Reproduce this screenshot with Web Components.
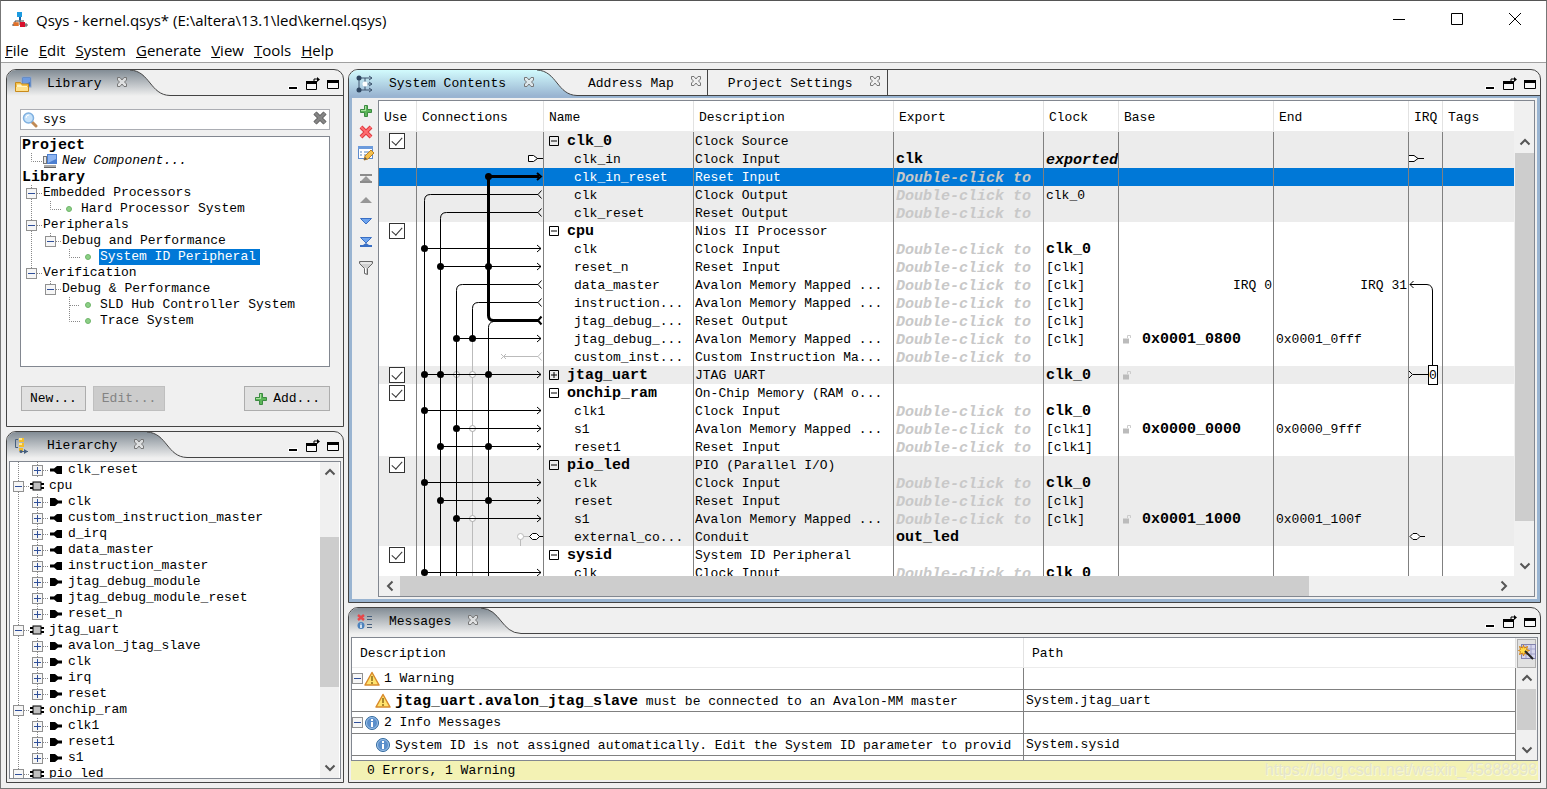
<!DOCTYPE html>
<html lang="en">
<head>
<meta charset="utf-8">
<title>Qsys - kernel.qsys*</title>
<style>
  html, body { margin: 0; height: 100%; background: #f0f0f0; }
</style>
</head>
<body>
<qsys-app></qsys-app>

<script>
const ICONS = {
  qsys: ['0 0 16 16', `<path d="M8 5v8M8 9H3v5M8 9h4" stroke="#444" fill="none"/><rect x="5" y="0" width="5" height="5" fill="#1d9be0"/><path d="M7 5h2v3H7z" fill="#1664a8"/><path d="M2 14v-3h1.500v3M4.500 14v-3H6v3" stroke="#e0702a" stroke-width="1.500" fill="none"/><path d="M0 13h2M12 13h4M14 11v4" stroke="#555"/><rect x="8" y="10" width="5" height="5" fill="#d8102c"/>`],
  library: ['0 0 18 18', `<rect x="8" y="2" width="9" height="10" fill="#3f74c4" stroke="#8fa6c8"/><path d="M9 3h7v4l-7 3z" fill="#6e9be0"/><path d="M1.500 7.500h5l1 1.500h7v7.500h-13z" fill="#f5c24a" stroke="#c88a1c"/><path d="M3 9.500h4l1 1.500h5v1H3z" fill="#fff3c4"/><path d="M2 12h12v4H2z" fill="#ffe08a"/>`],
  hierarchy: ['0 0 18 18', `<path d="M4 2.500H1.500v8H4" stroke="#47607e" fill="none"/><path d="M5 1h5v4H5zM5 6h5v4H5zM5 11h4v3H5z" fill="#f2bd2b"/><path d="M5 1h3v2H5zM5 6h3v2H5z" fill="#ffe88c"/><path d="M7 14.500h7" stroke="#47607e"/><circle cx="7" cy="14.500" r="1.500" fill="#47607e"/><path d="M10 12l4 2.500-4 2.500z" fill="#47607e"/>`],
  system: ['0 0 18 18', `<path d="M3 3v12M3 3h13M3 15h13M9 3v12M9 9h7" stroke="#3f556e" fill="none"/><circle cx="3" cy="3" r="2.500" fill="#2f4660"/><circle cx="3" cy="15" r="2.500" fill="#2f4660"/><circle cx="9" cy="9" r="2.500" fill="#fff"/><path d="M13 1l3 2-3 2M13 13l3 2-3 2M13 7l3 2-3 2" stroke="#3f556e" fill="none"/>`],
  messages: ['0 0 18 18', `<path d="M2 2l6 5M8 2L2 7" stroke="#e8474a" stroke-width="2.500"/><circle cx="5" cy="12.500" r="3.500" fill="#4c82bd"/><path d="M5 10.500v1M5 12v3" stroke="#fff" stroke-width="1.500"/><path d="M11 3.500h5M11 6.500h5M11 11.500h5M11 14.500h5" stroke="#47607e"/>`],
  close: ['0 0 12 12', `<path d="M1.500 1.500h2.500l2 2.500 2-2.500h2.500v2.500L8.500 6l2 2v2.500H8L6 8l-2 2.500H1.500V8l2-2-2-2z" fill="#eee" fill-opacity=".7" stroke="#777"/>`],
  minimize: ['0 0 14 14', `<path d="M4 9h10v4H4z" fill="#fff"/><path d="M5 10h8v2H5z"/>`],
  detach: ['0 0 16 14', `<path d="M2.500 4.500h10v8h-10z" fill="#f8f8f8" stroke="#000"/><path d="M2 4h11v3H2z"/><path d="M10 6V2h4" fill="none" stroke="#000"/><path d="M13 0l3 2.500-3 2.500z"/>`],
  maximize: ['0 0 14 14', `<path d="M1.500 3.500h11v8h-11z" fill="#f8f8f8" stroke="#000"/><path d="M1 3h12v3H1z"/>`],
  search: ['0 0 16 16', `<path d="M10 10l4 4" stroke="#c08a55" stroke-width="3" stroke-linecap="round"/><circle cx="6.500" cy="6" r="5" fill="#c6e2fa" stroke="#7fb0e0" stroke-width="1.500"/><path d="M4 6a3 3 0 0 1 3-3" stroke="#fff" fill="none"/>`],
  clear: ['0 0 16 16', `<path d="M3 3l10 10M13 3L3 13" stroke="#555" stroke-width="4.500"/><path d="M3 3l10 10M13 3L3 13" stroke="#858585" stroke-width="3"/>`],
  component: ['0 0 16 16', `<rect x="1.500" y="3.500" width="3" height="7" fill="#e8e8e8" stroke="#777"/><rect x="5" y="1" width="10" height="10" fill="#4c7fd0"/><path d="M6 2h8v4l-8 4z" fill="#8db4f0"/><path d="M2 12h12v2H2z" fill="#aaa"/><path d="M2 14.500h12" stroke="#666"/>`],
  dot: ['0 0 16 16', `<circle cx="8" cy="8" r="2.500" fill="#8ccf86" stroke="#6fb56a"/>`],
  chip: ['0 0 16 16', `<path d="M1 6h14M1 10h14" stroke="#000" stroke-width="2"/><rect x="4" y="4" width="8" height="8" fill="#c0c0c0" stroke="#000"/>`],
  portin: ['0 0 16 16', `<path d="M2 4h5l3 2.500h4v3h-4L7 12H2z"/>`],
  portout: ['0 0 16 16', `<path d="M14 4H9L6 6.500H2v3h4L9 12h5z"/>`],
  add: ['0 0 14 14', `<path d="M5.500 1.500h3v4h4v3h-4v4h-3v-4h-4v-3h4z" fill="#5cb558" stroke="#3d8b42"/><path d="M6 2v4H2v1h5V2z" fill="#a9e2a0"/>`],
  remove: ['0 0 14 14', `<path d="M2 2l10 10M12 2L2 12" stroke="#dd3a40" stroke-width="4"/><path d="M2 2l10 10M12 2L2 12" stroke="#ff6d70" stroke-width="2"/>`],
  edit: ['0 0 18 16', `<rect x="1.500" y="1.500" width="14" height="12" fill="#fff" stroke="#5f8ccc"/><path d="M1 1h15v3H1z" fill="#6c9bdc"/><path d="M3 7h2M3 10h2M7 7h6M7 10h4" stroke="#5580b8"/><path d="M7 15l1-4 6-6 3 3-6 6z" fill="#f4c04c" stroke="#b87f28"/><path d="M7 15l1-3 2 2z" fill="#555"/>`],
  top: ['0 0 14 14', `<path d="M1 2h12v2H1z" fill="#8c8c8c"/><path d="M7 4l5 5H2z" fill="#999"/><path d="M1 9h12v2H1z" fill="#8c8c8c"/>`],
  up: ['0 0 14 14', `<path d="M7 4l6 6H1z" fill="#979797"/>`],
  down: ['0 0 14 14', `<path d="M1.500 4.500h11L7 10z" fill="#6ea4ee" stroke="#3a6fc4"/>`],
  bottom: ['0 0 14 14', `<path d="M1.500 2.500h11L7 8z" fill="#6ea4ee" stroke="#3a6fc4"/><path d="M1 10h12v2H1zM4 10l3-2 3 2z" fill="#3a6fc4"/>`],
  filter: ['0 0 16 16', `<path d="M1.500 1.500h13v2l-5 5v6l-3-1V8.500l-5-5z" fill="#d0d0d0" stroke="#666"/><path d="M3 3h10" stroke="#fff"/><path d="M7.500 8v5" stroke="#fff"/>`],
  lock: ['0 0 10 10', `<path d="M1 4.500h6v5H1z" fill="#bbb"/><path d="M5.500 4V1.500h3V4" stroke="#ccc" fill="none"/>`],
  warning: ['0 0 16 16', `<path d="M8 1.500L15 14H1z" fill="#ffe36e" stroke="#d88a2b" stroke-width="1.500" stroke-linejoin="round"/><path d="M8 5v5M8 11v2" stroke="#8d6a18" stroke-width="1.500"/>`],
  info: ['0 0 16 16', `<circle cx="8" cy="8" r="6.500" fill="#5b8fcb" stroke="#336a9e"/><circle cx="8" cy="8" r="5.500" fill="none" stroke="#9cc0e6"/><path d="M8 4v2M8 7v5" stroke="#fff" stroke-width="2"/>`],
  columns: ['0 0 18 18', `<rect x="3.500" y="1.500" width="14" height="14" fill="#d6d6ee" stroke="#8383ae"/><path d="M3 6h14M3 11h14M8 2v13M13 2v13" stroke="#a2a2c8"/><path d="M5.500 2l1 3 3-1.500-1 3 3 1-3 1 1 3-3-1.500-1 3-1-3-3 1.500 1-3-2-1 2-1-1-3 3 1.500z" fill="#ffdb4a" stroke="#cf7e17"/><path d="M7 8l8 8" stroke="#222" stroke-width="2"/>`],
  winmin: ['0 0 14 14', `<path d="M1 7.500h12" stroke="#000"/>`],
  winmax: ['0 0 14 14', `<path d="M1.500 1.500h11v11h-11z" stroke="#000" fill="none"/>`],
  winclose: ['0 0 14 14', `<path d="M1 1l12 12M13 1L1 13" stroke="#000" fill="none"/>`],
  chevup: ['0 0 12 12', `<path d="M1.500 8.500L6 4l4.500 4.500" stroke="#555" stroke-width="2" fill="none"/>`],
  chevdown: ['0 0 12 12', `<path d="M1.500 3.500L6 8l4.500-4.500" stroke="#555" stroke-width="2" fill="none"/>`],
  chevleft: ['0 0 12 12', `<path d="M8.500 1.500L4 6l4.500 4.500" stroke="#555" stroke-width="2" fill="none"/>`],
  chevright: ['0 0 12 12', `<path d="M3.500 1.500L8 6l-4.500 4.500" stroke="#555" stroke-width="2" fill="none"/>`]
};

class Base extends HTMLElement {
  connectedCallback() {
    if (this.shadowRoot) return;
    this.attachShadow({ mode: 'open' }).innerHTML =
      `<style>*{box-sizing:border-box}button{font:inherit;color:inherit;border:0;padding:0;margin:0;background:none}${this.css()}</style>${this.html()}`;
  }
}

customElements.define('q-icon', class extends Base {
  css() { return `:host{display:inline-flex;flex:none}svg{display:block}`; }
  html() {
    const [box, body] = ICONS[this.getAttribute('name')];
    const [, , w, h] = box.split(' ');
    return `<svg viewBox="${box}" width="${w}" height="${h}" aria-hidden="true">${body}</svg>`;
  }
});

customElements.define('title-bar', class extends Base {
  css() { return `
    :host{display:flex;align-items:center;height:37px;padding:0 24px 0 11px;background:#fff;font:15px "Open Sans","Noto Sans",sans-serif;color:#000}
    h1{font:inherit;margin:0 0 0 8px;flex:1}
    nav{display:flex;gap:44px}`; }
  html() { return `<q-icon name="qsys"></q-icon><h1><slot></slot></h1>
    <nav><button aria-label="Minimize"><q-icon name="winmin"></q-icon></button><button aria-label="Maximize"><q-icon name="winmax"></q-icon></button><button aria-label="Close"><q-icon name="winclose"></q-icon></button></nav>`; }
});

customElements.define('menu-bar', class extends Base {
  css() { return `
    :host{display:flex;align-items:center;gap:10px;height:25px;padding:0 4px;background:#fff;border-bottom:1px solid #a0a0a0;font:15px "Open Sans","Noto Sans",sans-serif;color:#000}
    button{white-space:pre}`; }
  html() { return ['File','Edit','System','Generate','View','Tools','Help'].map(t => `<button><u>${t[0]}</u>${t.slice(1)}</button>`).join(''); }
});

customElements.define('dock-panel', class extends Base {
  css() { return `
    :host{display:flex;flex-direction:column;min-height:0;min-width:0;border:1px solid #444;border-radius:10px 10px 0 0;background:#f0f0f0;overflow:hidden;
      --top:#828c95;--bottom:#f0f0f0}
    :host([active]){--top:#d2fbfd;--bottom:#99b4d1}
    header{display:flex;height:26px;flex:none}
    .tab{display:flex;align-items:center;padding:1px 2px 0 7px;background:linear-gradient(var(--top),var(--bottom))}
    .label{flex:1;text-align:left;padding-left:15px;white-space:pre}
    .curve{display:block;flex:none}
    .rest{flex:1;display:flex;border-bottom:1px solid #444;min-width:0}
    .actions{display:flex;margin-left:auto;align-items:center;gap:6px;padding:6px 3px 0 0}
    .body{flex:1;display:flex;flex-direction:column;min-height:0}
    :host([active]) .body{border:3px solid #99b4d1;border-top-width:2px;background:#f0f0f0;margin:0}`; }
  html() {
    const w = this.getAttribute('tab-width');
    return `<header><div class="tab" style="width:${w}px"><q-icon name="${this.getAttribute('icon')}"></q-icon><button class="label">${this.getAttribute('label')}</button><button aria-label="Close tab"><q-icon name="close"></q-icon></button></div>
    <svg class="curve" width="40" height="26" viewBox="0 0 40 26" aria-hidden="true"><defs><linearGradient id="g" x1="0" y1="0" x2="0" y2="26" gradientUnits="userSpaceOnUse"><stop offset="0" style="stop-color:var(--top)"/><stop offset="1" style="stop-color:var(--bottom)"/></linearGradient></defs>
    <path d="M0 0C20 1 20 25 40 25.500V26H0z" fill="url(#g)"/><path d="M0 0C20 1 20 25 40 25.500" fill="none" stroke="#444"/></svg>
    <div class="rest"><slot name="tabs"></slot><div class="actions"><button aria-label="Minimize"><q-icon name="minimize"></q-icon></button><button aria-label="Detach"><q-icon name="detach"></q-icon></button><button aria-label="Maximize"><q-icon name="maximize"></q-icon></button></div></div></header>
    <div class="body"><slot></slot></div>`;
  }
});

customElements.define('side-tab', class extends Base {
  css() { return `:host{display:flex;align-items:center;gap:16px;padding:1px 6px 0 20px;border-right:1px solid #444}:host(:first-of-type){padding:1px 5px 0 11px}button{white-space:pre}`; }
  html() { return `<button><slot></slot></button><button aria-label="Close tab"><q-icon name="close"></q-icon></button>`; }
});

customElements.define('scroll-bar', class extends Base {
  css() { return `
    :host{display:flex;flex-direction:column;width:19px;flex:none;background:#f0f0f0}
    :host([horizontal]){flex-direction:row;width:auto;height:20px}
    button{display:flex;align-items:center;justify-content:center;flex:none;height:20px}
    :host([horizontal]) button{height:auto;width:21px}
    .track{flex:1;display:flex;flex-direction:inherit;min-height:0}
    .thumb{background:#cdcdcd}`; }
  html() {
    const h = this.hasAttribute('horizontal');
    const [a, b, c] = this.getAttribute('split').split(' ');
    return `<button aria-label="Scroll back"><q-icon name="${h ? 'chevleft' : 'chevup'}"></q-icon></button>
    <div class="track"><div style="flex:${a} 0 0"></div><div class="thumb" style="flex:${b} 0 0"></div><div style="flex:${c} 0 0"></div></div>
    <button aria-label="Scroll forward"><q-icon name="${h ? 'chevright' : 'chevdown'}"></q-icon></button>`;
  }
});

/* One tree line. "guides" holds one letter per indent level:
   | passing line, L last branch, E middle branch, M/m expanded, P/p collapsed (lower case: line stops here). */
customElements.define('tree-row', class extends Base {
  css() { return `
    :host{display:flex;align-items:center;height:16px;line-height:16px;white-space:pre}
    svg{display:block;flex:none}q-icon{margin-right:3px}
    span{padding:0 1px}
    :host([bold]) span{font-weight:bold;font-size:15px;line-height:18px;padding:0}
    :host([bold]){margin-left:-1px;align-items:flex-start}
    :host([italic]) span{font-style:italic}
    :host([selected]) span{background:#0078d7;color:#fff;padding-right:4px}`; }
  cell(c) {
    const line = d => `<path d="${d}" stroke="#888" stroke-dasharray="1 1" fill="none"/>`;
    let s = '';
    if (c === '|') s = line('M8.500 0V16');
    if (c === 'L') s = line('M8.500 0V8.500H19');
    if (c === 'E') s = line('M8.500 0V16M9 8.500H19');
    if ('MmPp'.includes(c)) {
      s = line((c === 'M' || c === 'P') ? 'M8.500 0V16M14 8.500H19' : 'M8.500 0V8M14 8.500H19') +
        `<rect x="3.500" y="3.500" width="10" height="10" fill="#f6f6f6" stroke="#919191"/><path d="M5 8.500h7${c.toLowerCase() === 'p' ? 'M8.500 5v7' : ''}" stroke="#2f4f9a"/>`;
      return `<button aria-label="Toggle"><svg width="19" height="16">${s}</svg></button>`;
    }
    return `<svg width="19" height="16" aria-hidden="true">${s}</svg>`;
  }
  html() {
    const icon = this.getAttribute('icon');
    return [...(this.getAttribute('guides') || '')].map(c => this.cell(c)).join('') + (icon ? `<q-icon name="${icon}"></q-icon>` : '') + `<span><slot></slot></span>`;
  }
});

customElements.define('library-view', class extends Base {
  css() { return `
    :host{flex:1;display:flex;flex-direction:column;padding:13px 13px 15px;min-height:0}
    .search{display:flex;align-items:center;height:21px;border:1px solid #abadb3;background:#fff;padding:0 1px}
    input{flex:1;min-width:0;border:0;outline:0;background:none;font:inherit;color:inherit;padding:0 0 0 5px;margin:0}
    .tree{flex:1;margin-top:6px;border:1px solid #828790;background:#fff;padding:0 2px;min-height:0;overflow:hidden}
    footer{display:flex;gap:7px;margin-top:19px;padding-left:1px}
    footer button{display:flex;align-items:center;height:25px;padding:0 8px;gap:5px;border:1px solid #adadad;background:#e1e1e1}
    footer button:disabled{background:#ccc;border-color:#bfbfbf;color:#838383}
    footer .add{margin-left:auto;padding:0 9px}`; }
  html() { return `
    <div class="search"><q-icon name="search"></q-icon><input aria-label="Search library" value="sys"><button aria-label="Clear search"><q-icon name="clear"></q-icon></button></div>
    <div class="tree">
      <tree-row bold>Project</tree-row>
      <tree-row guides="L" icon="component" italic>New Component...</tree-row>
      <tree-row bold>Library</tree-row>
      <tree-row guides="M">Embedded Processors</tree-row>
      <tree-row guides="|L" icon="dot">Hard Processor System</tree-row>
      <tree-row guides="M">Peripherals</tree-row>
      <tree-row guides="|m">Debug and Performance</tree-row>
      <tree-row guides="| L" icon="dot" selected>System ID Peripheral</tree-row>
      <tree-row guides="m">Verification</tree-row>
      <tree-row guides=" m">Debug &amp; Performance</tree-row>
      <tree-row guides="  E" icon="dot">SLD Hub Controller System</tree-row>
      <tree-row guides="  L" icon="dot">Trace System</tree-row>
    </div>
    <footer><button>New...</button><button disabled>Edit...</button><button class="add"><q-icon name="add"></q-icon>Add...</button></footer>`; }
});

customElements.define('hierarchy-view', class extends Base {
  css() { return `
    :host{flex:1;display:flex;margin:3px 2px;border:1px solid #828790;background:#fff;min-height:0}
    .rows{flex:1;overflow:hidden;min-width:0}scroll-bar{margin-right:1px}`; }
  html() {
    const rows = [['|P','portout','clk_reset'],['M','chip','cpu'],['|P','portin','clk'],['|P','portout','custom_instruction_master'],['|P','portout','d_irq'],['|P','portout','data_master'],['|P','portout','instruction_master'],['|P','portin','jtag_debug_module'],['|P','portout','jtag_debug_module_reset'],['|p','portin','reset_n'],['M','chip','jtag_uart'],['|P','portin','avalon_jtag_slave'],['|P','portin','clk'],['|P','portin','irq'],['|p','portin','reset'],['M','chip','onchip_ram'],['|P','portin','clk1'],['|P','portin','reset1'],['|p','portin','s1'],['M','chip','pio_led']];
    return `<div class="rows">${rows.map(([g, i, t]) => `<tree-row guides="${g}" icon="${i}">${t}</tree-row>`).join('')}</div><scroll-bar split="56 152 72"></scroll-bar>`;
  }
});

customElements.define('tool-strip', class extends Base {
  css() { return `:host{display:flex;flex-direction:column;align-items:center;width:26px;flex:none;padding:3px 0 0 2px;gap:1px}button{display:flex;align-items:center;justify-content:center;height:20px;width:22px}hr{border:0;margin:0;height:4px}`; }
  html() {
    return ['add','remove','edit','','top','up','down','bottom','','filter'].map(n => n ? `<button aria-label="${n}"><q-icon name="${n}"></q-icon></button>` : '<hr>').join('');
  }
});

/* Wiring between interfaces: lanes run down, every wire ends at the right edge of its table row. */
customElements.define('connection-graph', class extends Base {
  css() { return `:host{position:absolute;left:0;top:0;pointer-events:none}svg{display:block}`; }
  html() {
    const lane = n => 7.5 + 16 * (n - 1), y = r => 18 * r + 8.5, end = 450;
    const p = (d, c = '#000', w = 1) => `<path d="${d}" fill="none" stroke="${c}" stroke-width="${w}"/>`;
    const head = (r, w = 1) => p(`M120 ${y(r) - 3.5}L124 ${y(r)}L120 ${y(r) + 3.5}`, '#000', w);
    const tail = (r, c = '#000', w = 1) => p(`M124.500 ${y(r) - 4}L121 ${y(r)}L124.500 ${y(r) + 4}`, c, w);
    const out = (n, r, stop = end) => p(`M121 ${y(r)}H${lane(n) + 6}Q${lane(n)} ${y(r)} ${lane(n)} ${y(r) + 6}V${stop}`) + tail(r);
    const into = (first, r) => p(`M${lane(first)} ${y(r)}H124`) + head(r);
    const dot = (n, r) => `<circle cx="${lane(n)}" cy="${y(r)}" r="3.500"/>`;
    const ring = (n, r) => `<circle cx="${lane(n)}" cy="${y(r)}" r="3" fill="#fff" stroke="#aaa"/>`;
    let s = p(`M${lane(4)} ${y(11)}V${end}`, '#bbb');
    for (const [n, r] of [[3, 13], [4, 13], [4, 16], [4, 21]]) s += ring(n, r);
    s += out(1, 3) + out(2, 4) + out(3, 8) + out(4, 9, y(11));
    s += p(`M${lane(5) + 5} ${y(10) + 1}Q${lane(5)} ${y(10) + 2} ${lane(5)} ${y(10) + 7}V${end}`);
    s += p(`M122 ${y(2)}H${lane(5)}V${y(10) - 5}Q${lane(5)} ${y(10)} ${lane(5) + 5} ${y(10)}H121`, '#000', 3) + head(2, 2) + tail(10, '#000', 2);
    const taps = [[6,[1]],[7,[2,5]],[11,[3,4]],[13,[1,2,5]],[15,[1]],[16,[3]],[17,[2,5]],[19,[1]],[20,[2,5]],[21,[3]],[24,[1]]];
    for (const [r, ns] of taps) s += into(ns[0], r) + ns.map(n => dot(n, r)).join('');
    s += dot(5, 2);
    s += p(`M84 ${y(12) - 2.5}l5 5m0-5l-5 5M87 ${y(12)}H121`, '#bbb') + tail(12, '#bbb');
    s += `<path d="M111.500 ${y(1) - 3}h5l4 3-4 3h-5zM120 ${y(1)}h7" fill="#fff" stroke="#000"/>`;
    s += p(`M103.500 ${y(22)}V414M103 ${y(22)}H112`, '#bbb') + `<circle cx="103.500" cy="${y(22)}" r="3" fill="#fff" stroke="#bbb"/><path d="M112.500 ${y(22)}l3-3h4l3 3-3 3h-4zM122 ${y(22)}h5" fill="#fff" stroke="#000"/>`;
    return `<svg width="127" height="450" aria-hidden="true">${s}</svg>`;
  }
});

customElements.define('irq-graph', class extends Base {
  css() { return `:host{position:absolute;left:0;top:0;pointer-events:none}svg{display:block}text{font-size:13px}`; }
  html() { return `<svg width="33" height="450"><g fill="none" stroke="#000">
    <path d="M0 23.500h5l4 3-4 3H0" fill="#fff"/><path d="M9 26.500h6"/><path d="M4.500 149L1 152.500l3.500 3.500M1 152.500H18Q23.500 153 23.500 159V234M0 239l3.500 3.500L0 246M4 242.500H19"/>
    <rect x="19.500" y="233.500" width="9" height="19" fill="#fff"/><path d="M1 404.500l3-3h4l3 3-3 3H4zM11 404.500h5" fill="#fff"/></g><text x="20" y="247">0</text></svg>`; }
});

customElements.define('system-table', class extends Base {
  css() { return `
    :host{flex:1;display:grid;grid-template-columns:1fr 20px;grid-template-rows:1fr 20px;margin:2px 2px 2px 0;border:1px solid #828790;min-width:0;min-height:0;background:#f0f0f0}
    .view{overflow:hidden;min-width:0;min-height:0;background:#fff}
    table{border-collapse:separate;border-spacing:0;table-layout:fixed;width:100%}
    th{height:31px;padding:2px 0 0 5px;text-align:left;font-weight:normal;border-bottom:1px solid #ececec;border-right:1px solid #e2e2e2;white-space:nowrap;overflow:hidden}
    td{height:18px;line-height:20px;padding:0 0 0 2px;border-right:1px solid #808080;white-space:pre;position:relative}
    td div{height:18px;overflow:hidden}
    th:last-child,td:last-child{border-right:0}
    tr.alt{background:#ececec}tr.sel{background:#0078d7;color:#fff}
    td.child{padding-left:30px}td.head{padding-left:5px;font-weight:bold;font-size:15px}
    td.desc{padding-left:1px}
    .head div{display:flex;align-items:flex-start;gap:8px}
    .fold{width:10px;height:18px;display:block}.fold svg{display:block}
    td.use{padding:1px 0 0 10px;line-height:0;vertical-align:top}
    input{appearance:none;width:16px;height:16px;margin:0;border:1px solid #333;background:#fff;position:relative;display:block}
    input:checked::before{content:"";position:absolute;left:4px;top:1px;width:5px;height:9px;border:solid #333;border-width:0 1px 1px 0;transform:rotate(42deg)}
    b{font-size:15px}.hint{font:italic bold 15px/22px "Liberation Mono",monospace;color:#c8c8c8}
    .exp{color:#000}td.right{text-align:right;padding-right:1px}
    .base div{display:flex;align-items:flex-start;gap:10px;padding-left:1px}.base q-icon{margin-top:4px}
    scroll-bar.v{margin:31px 0 0 1px;width:19px}
    .v{grid-row:1;grid-column:2}.h{grid-row:2;grid-column:1}`; }
  html() {
    const D = 'Double-click to', A = 'Avalon Memory Mapped ...';
    /* name, description, export, clock, base, end; a leading - or + marks a module, * marks a bold value */
    const rows = [
      ['-clk_0','Clock Source'],['clk_in','Clock Input','*clk','!exported'],['clk_in_reset','Reset Input',D],['clk','Clock Output',D,'clk_0'],['clk_reset','Reset Output',D],
      ['-cpu','Nios II Processor'],['clk','Clock Input',D,'*clk_0'],['reset_n','Reset Input',D,'[clk]'],['data_master',A,D,'[clk]','>IRQ 0','>IRQ 31'],['instruction...',A,D,'[clk]'],['jtag_debug_...','Reset Output',D,'[clk]'],['jtag_debug_...',A,D,'[clk]','0x0001_0800','0x0001_0fff'],['custom_inst...','Custom Instruction Ma...',D],
      ['+jtag_uart','JTAG UART','','*clk_0',' '],
      ['-onchip_ram','On-Chip Memory (RAM o...'],['clk1','Clock Input',D,'*clk_0'],['s1',A,D,'[clk1]','0x0000_0000','0x0000_9fff'],['reset1','Reset Input',D,'[clk1]'],
      ['-pio_led','PIO (Parallel I/O)'],['clk','Clock Input',D,'*clk_0'],['reset','Reset Input',D,'[clk]'],['s1',A,D,'[clk]','0x0001_1000','0x0001_100f'],['external_co...','Conduit','*out_led'],
      ['-sysid','System ID Peripheral'],['clk','Clock Input',D,'*clk_0']];
    const alt = r => r < 5 || r === 13 || (r > 17 && r < 23);
    const val = (t = '') => t[0] === '*' ? `<td><div><b>${t.slice(1)}</b></div></td>` : t[0] === '!' ? `<td><div class="hint exp">${t.slice(1)}</div></td>` : t === D ? `<td><div class="hint">${t}</div></td>` : t[0] === '>' ? `<td class="right"><div>${t.slice(1)}</div></td>` : `<td><div>${t}</div></td>`;
    const body = rows.map(([n, d, e, c, b, f], r) => {
      const mod = '+-'.includes(n[0]);
      const name = mod ? `<td class="head"><div><button class="fold" aria-label="Toggle ${n.slice(1)}"><svg width="10" height="18"><path d="M.500 4.500h9v9h-9zM2 9h6${n[0] === '+' ? 'M5 6v6' : ''}" fill="none" stroke="#000"/></svg></button>${n.slice(1)}</div></td>` : `<td class="child"><div>${n}</div></td>`;
      const base = b && b[0] !== '>' ? `<td class="base"><div><q-icon name="lock"></q-icon><b>${b}</b></div></td>` : val(b);
      return `<tr class="${r === 2 ? 'sel' : alt(r) ? 'alt' : ''}"><td class="use">${mod ? `<input type="checkbox" checked aria-label="Use ${n.slice(1)}">` : ''}</td><td>${r ? '' : '<connection-graph></connection-graph>'}</td>${name}<td class="desc"><div>${d}</div></td>${val(e)}${val(c)}${base}${val(f)}<td>${r ? '' : '<irq-graph></irq-graph>'}</td><td></td></tr>`;
    }).join('');
    return `<div class="view"><table><colgroup>${[38,127,150,200,150,75,155,135,34].map(w => `<col style="width:${w}px">`).join('')}<col></colgroup>
      <thead><tr>${['Use','Connections','Name','Description','Export','Clock','Base','End','IRQ','Tags'].map(t => `<th scope="col">${t}</th>`).join('')}</tr></thead><tbody>${body}</tbody></table></div>
      <scroll-bar class="v" split="1 367 35"></scroll-bar><scroll-bar class="h" horizontal split="0 909 184"></scroll-bar>`;
  }
});

customElements.define('system-view', class extends Base {
  css() { return `:host{flex:1;display:flex;min-height:0;min-width:0}`; }
  html() { return `<tool-strip></tool-strip><system-table></system-table>`; }
});

customElements.define('message-view', class extends Base {
  css() { return `
    :host{flex:1;display:flex;flex-direction:column;margin:3px 2px 2px;min-height:0;position:relative}
    .box{flex:1;display:flex;border:1px solid #828790;min-height:0;background:#f0f0f0}
    .view{flex:1;overflow:hidden;background:#fff;min-width:0}
    table{border-collapse:separate;border-spacing:0;table-layout:fixed;width:100%}
    th{height:30px;text-align:left;font-weight:normal;padding:1px 8px 0;border-right:1px solid #e2e2e2;border-bottom:1px solid #ececec}
    td{height:22px;line-height:21px;padding:0;border-right:1px solid #808080;border-bottom:1px solid #808080;white-space:pre}
    td div{display:flex;align-items:center;height:21px;overflow:hidden}
    td:nth-child(2){padding-left:2px}
    q-icon{margin-right:4px}.group q-icon{margin-left:1px}.item{padding-left:23px}b{font-size:15px}
    .item span{padding-top:1px}
    .side{display:flex;flex-direction:column;width:21px;padding:1px 1px 0}
    .side button{height:29px;background:#e1e1e1;border:1px solid #adadad}.side button q-icon{margin:0}
    scroll-bar{flex:1}
    footer{height:19px;line-height:20px;background:#f3f2b4;padding-left:16px}
    .mark{position:absolute;right:1px;bottom:0;font:16px/20px "Liberation Sans",sans-serif;color:#e4e4cc;text-shadow:1px 1px 0 #fafad8}`; }
  html() {
    const fold = '<button aria-label="Toggle"><svg width="11" height="12" style="display:block"><rect x=".500" y=".500" width="10" height="10" fill="#f6f6f6" stroke="#919191"/><path d="M2 5.500h7" stroke="#2f4f9a"/></svg></button>';
    const g = (i, t) => `<tr><td><div class="group">${fold}<q-icon name="${i}"></q-icon>${t}</div></td><td></td></tr>`;
    const m = (i, t, p) => `<tr><td><div class="item"><q-icon name="${i}"></q-icon><span>${t}</span></div></td><td>${p}</td></tr>`;
    return `<div class="box"><div class="view"><table><colgroup><col style="width:672px"><col></colgroup><thead><tr><th scope="col">Description</th><th scope="col">Path</th></tr></thead><tbody>
      ${g('warning', '1 Warning')}${m('warning', '<b>jtag_uart.avalon_jtag_slave</b> must be connected to an Avalon-MM master', 'System.jtag_uart')}
      ${g('info', '2 Info Messages')}${m('info', 'System ID is not assigned automatically. Edit the System ID parameter to provid', 'System.sysid')}${m('info', '', '')}
      </tbody></table></div><div class="side"><button aria-label="Column settings"><q-icon name="columns"></q-icon></button><scroll-bar split="1 43 10"></scroll-bar></div></div>
      <footer>0 Errors, 1 Warning</footer><div class="mark">https://blog.csdn.net/weixin_45888898</div>`;
  }
});

customElements.define('qsys-app', class extends Base {
  css() { return `
    :host{display:flex;flex-direction:column;height:100vh;box-sizing:border-box;border:1px solid #777;border-top-color:#555;background:#f0f0f0;font:13px "Liberation Mono",monospace;color:#000}
    main{flex:1;display:grid;grid-template-columns:338px 1fr;gap:4px;padding:6px 5px 5px;min-height:0}
    section{display:grid;gap:4px;min-height:0;min-width:0}
    .left{grid-template-rows:358fr 352fr}.right{grid-template-rows:534fr 176fr}`; }
  html() { return `
    <title-bar>Qsys - kernel.qsys* (E:\\altera\\13.1\\led\\kernel.qsys)</title-bar>
    <menu-bar></menu-bar>
    <main>
      <section class="left">
        <dock-panel label="Library" icon="library" tab-width="123"><library-view></library-view></dock-panel>
        <dock-panel label="Hierarchy" icon="hierarchy" tab-width="140"><hierarchy-view></hierarchy-view></dock-panel>
      </section>
      <section class="right">
        <dock-panel active label="System Contents" icon="system" tab-width="188"><side-tab slot="tabs">Address Map</side-tab><side-tab slot="tabs">Project Settings</side-tab><system-view></system-view></dock-panel>
        <dock-panel label="Messages" icon="messages" tab-width="132"><message-view></message-view></dock-panel>
      </section>
    </main>`; }
});
</script>
</body>
</html>
